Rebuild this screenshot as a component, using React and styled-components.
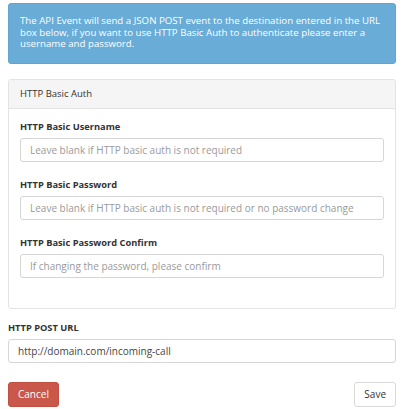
import styled, { createGlobalStyle } from "styled-components";

const GlobalStyle = createGlobalStyle`
    body {
        margin: 0;
        background: #fff;
        font-family: "Open Sans", "Liberation Sans", sans-serif;
        color: #333;
    }
`;

export default function App() {
    return (
        <Page>
            <GlobalStyle />
            <Alert>
                The API Event will send a JSON POST event to the destination entered in the URL
                box below, if you want to use HTTP Basic Auth to authenticate please enter a
                username and password.
            </Alert>
            <Panel>
                <PanelHeading>HTTP Basic Auth</PanelHeading>
                <PanelBody>
                    <Field>
                        <Label>HTTP Basic Username</Label>
                        <Input placeholder="Leave blank if HTTP basic auth is not required" />
                    </Field>
                    <Field>
                        <Label>HTTP Basic Password</Label>
                        <Input
                            type="password"
                            placeholder="Leave blank if HTTP basic auth is not required or no password change"
                        />
                    </Field>
                    <Field>
                        <Label>HTTP Basic Password Confirm</Label>
                        <Input type="password" placeholder="If changing the password, please confirm" />
                    </Field>
                </PanelBody>
            </Panel>
            <Field $outer>
                <Label>HTTP POST URL</Label>
                <Input defaultValue="http://domain.com/incoming-call" />
            </Field>
            <Actions>
                <Button $variant="danger">Cancel</Button>
                <Button>Save</Button>
            </Actions>
        </Page>
    );
}

const Page = styled.div`
    width: 388px;
    padding: 3px 0 0 8px;
`;
const Alert = styled.div`
    background: #68acd7;
    border: 1px solid #62a5d0;
    border-radius: 3px;
    color: #fff;
    font-size: 9.7px;
    line-height: 11.5px;
    padding: 11px 8px 13px 11px;
`;
const Panel = styled.div`
    margin-top: 15px;
    border: 1px solid #e3e3e3;
    border-radius: 3px;
`;
const PanelHeading = styled.div`
    background: #f5f5f5;
    border-bottom: 1px solid #e3e3e3;
    font-size: 9.5px;
    height: 28px;
    padding: 0 11px;
    display: flex;
    align-items: center;
    border-radius: 3px 3px 0 0;
`;
const PanelBody = styled.div`
    padding: 12px 11px 13px 11px;
`;
const Field = styled.div`
    display: flex;
    flex-direction: column;
    gap: 5px;
    margin-bottom: ${(p) => (p.$outer ? "19px" : "17px")};
    margin-top: ${(p) => (p.$outer ? "13px" : "0")};
`;
const Label = styled.label`
    font-weight: 700;
    font-size: 9.3px;
    line-height: 12px;
    color: #333;
`;
const Input = styled.input`
    box-sizing: border-box;
    height: 24px;
    width: 100%;
    border: 1px solid #d6d6d6;
    border-radius: 3px;
    padding: 0 9px;
    font-family: "Open Sans", "Liberation Sans", sans-serif;
    font-size: 10px;
    color: #444;
    outline: none;

    &::placeholder {
        color: #9a9a9a;
    }
`;
const Actions = styled.div`
    display: flex;
    justify-content: space-between;
    align-items: center;
`;
const Button = styled.button`
    box-sizing: border-box;
    height: 25px;
    padding: 0 9px;
    border-radius: 3px;
    font-family: "Open Sans", "Liberation Sans", sans-serif;
    font-size: 10px;
    cursor: pointer;
    background: ${(p) => (p.$variant === "danger" ? "#c9584a" : "#fff")};
    color: ${(p) => (p.$variant === "danger" ? "#fff" : "#333")};
    border: 1px solid ${(p) => (p.$variant === "danger" ? "#c0503f" : "#d9d9d9")};
`;
